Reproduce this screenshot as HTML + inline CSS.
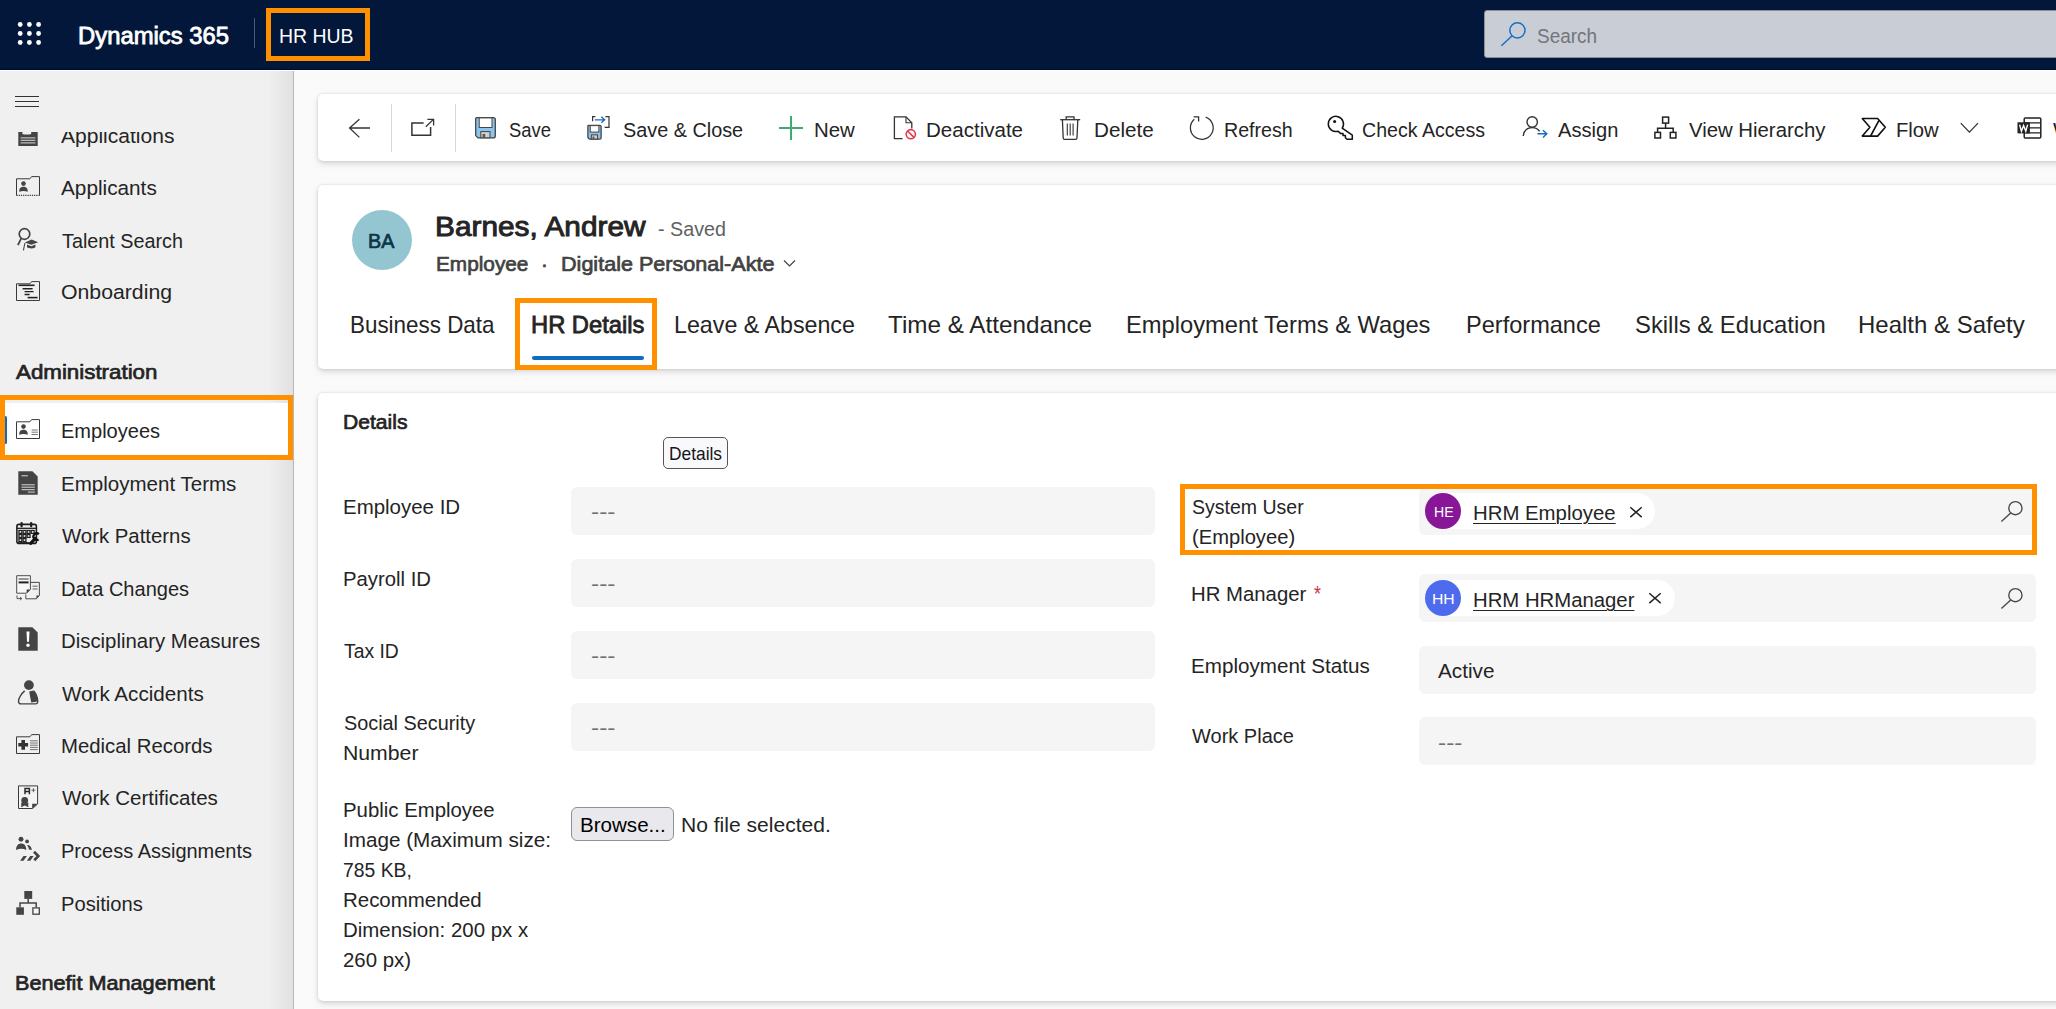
<!DOCTYPE html>
<html><head><meta charset="utf-8"><title>Employee: Barnes, Andrew - Dynamics 365</title>
<style>
html,body{margin:0;padding:0;overflow:hidden;}
#app{position:absolute;left:0;top:0;width:2056px;height:1009px;overflow:hidden;background:#fafafa;}
body{width:2056px;height:1009px;overflow:hidden;position:relative;background:#fafafa;font-family:"Liberation Sans",sans-serif;}
.t{position:absolute;white-space:pre;line-height:1;font-family:"Liberation Sans",sans-serif;}
.a{position:absolute;box-sizing:border-box;}
.card{position:absolute;background:#fff;box-shadow:0 0 3px rgba(0,0,0,.12),0 3px 6px rgba(0,0,0,.13);}
.fld{position:absolute;background:#f5f5f5;border-radius:6px;}
.ob{position:absolute;box-sizing:border-box;border:5px solid #ff9000;}
svg{position:absolute;overflow:visible;}
</style></head><body><div id="app">
<div class="a" style="left:0;top:0;width:2056px;height:70px;background:#03173a"></div>
<div class="a" style="left:0;top:68.6px;width:2056px;height:1.4px;background:#010a2e"></div>
<div class="a" style="left:0;top:70px;width:2056px;height:1.3px;background:#fff;z-index:3"></div>
<svg style="left:0;top:0" width="60" height="70"><circle cx="20.2" cy="24.5" r="2.4" fill="#fff"/><circle cx="20.2" cy="33.5" r="2.4" fill="#fff"/><circle cx="20.2" cy="42.5" r="2.4" fill="#fff"/><circle cx="29.4" cy="24.5" r="2.4" fill="#fff"/><circle cx="29.4" cy="33.5" r="2.4" fill="#fff"/><circle cx="29.4" cy="42.5" r="2.4" fill="#fff"/><circle cx="38.599999999999994" cy="24.5" r="2.4" fill="#fff"/><circle cx="38.599999999999994" cy="33.5" r="2.4" fill="#fff"/><circle cx="38.599999999999994" cy="42.5" r="2.4" fill="#fff"/></svg>
<div class="a" style="left:254px;top:18px;width:1px;height:30px;background:#4a5872"></div>
<div class="ob" style="left:266px;top:8px;width:104px;height:53px"></div>
<div class="a" style="left:1484px;top:10.3px;width:580px;height:47.6px;background:#c9cdd6;border-radius:3px;border:1px solid #8c8e96"></div>
<svg style="left:1500px;top:21px" width="28" height="28" viewBox="0 0 28 28"><circle cx="17.4" cy="9.3" r="7.6" fill="none" stroke="#156fc8" stroke-width="1.5"/><path d="M12.1 14.8 L1.4 24.8" stroke="#156fc8" stroke-width="1.5" fill="none"/></svg>
<div class="a" style="left:0;top:70px;width:294px;height:939px;background:#f0f0f0;border-right:1px solid #b8b8b8"></div>
<div class="a" style="left:268px;top:70px;width:25px;height:939px;background:linear-gradient(to right,rgba(0,0,0,0),rgba(0,0,0,.065))"></div>
<svg style="left:15px;top:95px" width="26" height="14"><path d="M0 1.5H24M0 6.5H24M0 11.5H24" stroke="#333" stroke-width="1"/></svg>
<div class="a" style="left:0;top:403px;width:293px;height:52px;background:#fff"></div>
<div class="a" style="left:4px;top:415.5px;width:2.5px;height:28px;background:#0f6cbd;border-radius:2px"></div>
<div class="ob" style="left:-1px;top:395px;width:294px;height:65px;border-width:5px 5px 5px 6px"></div>
<div class="a" style="left:50px;top:118px;width:200px;height:13.6px;background:#f0f0f0;z-index:5"></div>
<div class="card" style="left:318px;top:94px;width:1760px;height:67px;border-radius:5px"></div>
<div class="a" style="left:391px;top:104px;width:1px;height:48px;background:#d6d6d6"></div>
<div class="a" style="left:455px;top:104px;width:1px;height:48px;background:#d6d6d6"></div>
<div class="card" style="left:318px;top:185px;width:1760px;height:184px;border-radius:5px"></div>
<div class="a" style="left:352px;top:210px;width:60px;height:60px;border-radius:50%;background:#94c6d2"></div>
<svg style="left:783px;top:259px" width="14" height="10"><path d="M1 1.5 L6.5 7 L12 1.5" fill="none" stroke="#424242" stroke-width="1.2"/></svg>
<div class="a" style="left:531.5px;top:355.5px;width:112.5px;height:4.5px;border-radius:3px;background:#0f6cbd"></div>
<div class="ob" style="left:515px;top:298px;width:142px;height:72px"></div>
<div class="card" style="left:318px;top:393px;width:1760px;height:608.2px;border-radius:5px"></div>
<div class="a" style="left:663px;top:437px;width:65px;height:32px;border:1px solid #55555a;border-radius:5px;background:#f9f9fb"></div>
<div class="fld" style="left:571.2px;top:486.9px;width:584.3px;height:48px"></div>
<div class="fld" style="left:571.2px;top:558.9px;width:584.3px;height:48px"></div>
<div class="fld" style="left:571.2px;top:630.9px;width:584.3px;height:48px"></div>
<div class="fld" style="left:571.2px;top:702.9px;width:584.3px;height:48px"></div>
<div class="a" style="left:571px;top:807px;width:103px;height:34px;border:1px solid #8f8f9d;border-radius:6px;background:#e9e9ed"></div>
<div class="fld" style="left:1419.2px;top:487.5px;width:616.6px;height:47.9px"></div>
<div class="fld" style="left:1419.2px;top:573.9px;width:616.6px;height:47.9px"></div>
<div class="fld" style="left:1419.2px;top:645.7px;width:616.6px;height:47.9px"></div>
<div class="fld" style="left:1419.2px;top:716.9px;width:616.6px;height:47.9px"></div>
<div class="ob" style="left:1179.5px;top:484px;width:857.5px;height:71px"></div>
<div class="a" style="left:1424.5px;top:493px;width:230px;height:36px;border-radius:18px;background:#fff"></div>
<div class="a" style="left:1425px;top:493px;width:36px;height:36px;border-radius:50%;background:#881798"></div>
<svg style="left:1629.7px;top:506.5px" width="12" height="10.4"><path d="M0.3 0.3L11.7 10.1M11.7 0.3L0.3 10.1" stroke="#242424" stroke-width="1.5"/></svg>
<div class="a" style="left:1424.5px;top:580px;width:250px;height:36px;border-radius:18px;background:#fff"></div>
<div class="a" style="left:1425px;top:580px;width:36px;height:36px;border-radius:50%;background:#4f6bed"></div>
<svg style="left:1649.4px;top:593.4px" width="12" height="10.4"><path d="M0.3 0.3L11.7 10.1M11.7 0.3L0.3 10.1" stroke="#242424" stroke-width="1.5"/></svg>
<svg style="left:2000px;top:500px" width="24" height="24" viewBox="0 0 24 24"><circle cx="15.4" cy="8.2" r="6.6" fill="none" stroke="#4a4a4a" stroke-width="1.4"/><path d="M10.7 12.9 L1.4 21.6" stroke="#4a4a4a" stroke-width="1.4"/></svg>
<svg style="left:2000px;top:587.4px" width="24" height="24" viewBox="0 0 24 24"><circle cx="15.4" cy="8.2" r="6.6" fill="none" stroke="#4a4a4a" stroke-width="1.4"/><path d="M10.7 12.9 L1.4 21.6" stroke="#4a4a4a" stroke-width="1.4"/></svg>
<svg style="left:16px;top:174.2px" width="24" height="24" viewBox="0 0 24 24"><path d="M0.5 4.8 H13.9 L15.6 2.6 H23.5 V21.5" fill="none" stroke="#3a3a3a" stroke-width="1"/><path d="M0.5 4.8 V21.5" stroke="#3a3a3a" stroke-width="1"/><path d="M0.5 21.4 H23.5" stroke="#3a3a3a" stroke-width="1.2" stroke-dasharray="1.2 1"/><circle cx="7.5" cy="9.6" r="2.3" fill="#444"/><path d="M3.2 17.799999999999997 C3.2 13.6 5.3 12.8 7.5 12.8 C9.7 12.8 11.8 13.6 11.8 17.799999999999997 Q7.5 16.2 3.2 17.799999999999997 Z" fill="#444"/></svg>
<svg style="left:16px;top:227.1px" width="24" height="24" viewBox="0 0 24 24"><circle cx="8.5" cy="7" r="5.3" fill="none" stroke="#444" stroke-width="1.7"/><path d="M5.2 11.4 L1.9 18.2" stroke="#444" stroke-width="1.8"/><path d="M8.8 15.4 L15.6 12.6 L22.2 15.2 L15.4 17.8 Z" fill="#444"/><path d="M11 17.6 V20.2 C13 21.8 17.4 21.8 19.4 20.2 V17.6 L15.4 19.2 Z" fill="#444"/><path d="M8.9 16 L7.4 23.4" stroke="#444" stroke-width="1.1"/></svg>
<svg style="left:16px;top:278.6px" width="24" height="24" viewBox="0 0 24 24"><path d="M0.5 4.8 H13.9 L15.6 2.6 H23.5 V21.5 H0.5 Z" fill="none" stroke="#3a3a3a" stroke-width="1"/><path d="M2.6 6.3 H18.6" stroke="#222" stroke-width="1.6"/><path d="M6.6 9.7 H16.6 M8.6 12.6 H17.6 M8.6 15.5 H13.6" stroke="#222" stroke-width="1.4"/><path d="M11.6 18.6 H21.6" stroke="#222" stroke-width="1.6"/></svg>
<svg style="left:16px;top:417.1px" width="24" height="24" viewBox="0 0 24 24"><path d="M0.5 4.8 H13.9 L15.6 2.6 H23.5 V21.5 H0.5 Z" fill="none" stroke="#3a3a3a" stroke-width="1"/><circle cx="7.5" cy="9.6" r="2.3" fill="#444"/><path d="M3.2 17.799999999999997 C3.2 13.6 5.3 12.8 7.5 12.8 C9.7 12.8 11.8 13.6 11.8 17.799999999999997 Q7.5 16.2 3.2 17.799999999999997 Z" fill="#444"/><path d="M15.6 13 H21.8 M15.6 15.2 H21.8 M15.6 17.5 H21.8" stroke="#666" stroke-width="0.9"/></svg>
<svg style="left:16px;top:470.7px" width="24" height="24" viewBox="0 0 24 24"><path d="M2.3 0.3 H16.4 L21.7 5.6 V23.7 H2.3 Z" fill="#444"/><path d="M5.5 4.8 H11.8 M5.5 13.8 H18.8 M5.5 16.2 H18.8 M5.5 18.7 H18.8 M11.8 21.1 H18.8" stroke="#d8d8d8" stroke-width="1"/></svg>
<svg style="left:16px;top:522.3px" width="24" height="24" viewBox="0 0 24 24"><rect x="0.9" y="2.4" width="19.5" height="19" rx="2" fill="none" stroke="#1e1e1e" stroke-width="1.6"/><path d="M0.9 6.3 H20.4" stroke="#1e1e1e" stroke-width="1.3"/><path d="M5.6 1.1 V4.2 M15.2 1.1 V4.2" stroke="#1e1e1e" stroke-width="2.3" stroke-linecap="round"/><path d="M2 21 H13" stroke="#1e1e1e" stroke-width="1.6"/><rect x="2.95" y="8.450000000000001" width="2.9" height="2.9" fill="none" stroke="#1e1e1e" stroke-width="1.25"/><rect x="2.95" y="12.55" width="2.9" height="2.9" fill="none" stroke="#1e1e1e" stroke-width="1.25"/><rect x="2.95" y="16.650000000000002" width="2.9" height="2.9" fill="none" stroke="#1e1e1e" stroke-width="1.25"/><rect x="7.05" y="8.450000000000001" width="2.9" height="2.9" fill="none" stroke="#1e1e1e" stroke-width="1.25"/><rect x="7.05" y="12.55" width="2.9" height="2.9" fill="none" stroke="#1e1e1e" stroke-width="1.25"/><rect x="7.05" y="16.650000000000002" width="2.9" height="2.9" fill="none" stroke="#1e1e1e" stroke-width="1.25"/><rect x="11.15" y="8.450000000000001" width="2.9" height="2.9" fill="none" stroke="#1e1e1e" stroke-width="1.25"/><rect x="11.15" y="12.55" width="2.9" height="2.9" fill="none" stroke="#1e1e1e" stroke-width="1.25"/><rect x="15.25" y="8.450000000000001" width="2.9" height="2.9" fill="none" stroke="#1e1e1e" stroke-width="1.25"/><path d="M14.6 21.4 L19.4 16.4" stroke="#111" stroke-width="3" stroke-linecap="round"/><path d="M22.9 12.2 A3.3 3.3 0 1 0 22.6 17.4" fill="none" stroke="#111" stroke-width="2.2"/></svg>
<svg style="left:16px;top:576.0px" width="24" height="24" viewBox="0 0 24 24"><path d="M0.7 -0.3 H14.4 V13.4 L10.6 17.2 H0.7 Z" fill="#f7f7f7" stroke="#3a3a3a" stroke-width="0.9"/><path d="M2.6 3 H12.6" stroke="#333" stroke-width="1"/><path d="M2.6 6.4 H12.6" stroke="#222" stroke-width="2"/><path d="M10.6 17.2 V13.4 H14.4 Z" fill="#444"/><path d="M14.6 6.4 H23.4 V19.4 L20.4 22.8 H9.8 V18.6" fill="none" stroke="#3a3a3a" stroke-width="0.9"/><path d="M16.6 10.2 H21.6 M16.6 13 H21.6" stroke="#555" stroke-width="0.9"/><path d="M20.4 22.8 V19.4 H23.4 Z" fill="#444"/><path d="M1 19.4 V22.6 H5.6 M4 21 L5.8 22.6 L4 24.2" fill="none" stroke="#444" stroke-width="0.9"/></svg>
<svg style="left:16px;top:627.2px" width="24" height="24" viewBox="0 0 24 24"><path d="M2.3 0.3 H16.4 L21.7 5.6 V23.7 H2.3 Z" fill="#444"/><path d="M10.5 4.6 H13.5 L13 14.8 H11 Z" fill="#fff"/><circle cx="12" cy="18.2" r="1.7" fill="#fff"/></svg>
<svg style="left:16px;top:680.7px" width="24" height="24" viewBox="0 0 24 24"><circle cx="12.9" cy="4.1" r="4.9" fill="#444"/><path d="M8.7 9.9 C5.5 12.5 2.2 17.5 2.5 20.5 Q2.6 22.9 5 22.9 H19.5 Q21.9 22.9 21.7 20 C21.5 16 20 12.5 17.7 9.9" fill="none" stroke="#444" stroke-width="1.4"/><path d="M13.2 10.4 L17.7 9.6 C20.2 12.5 21.9 16.6 21.4 19.6 L20.4 20.8 L15.2 21.6 Z" fill="#444"/></svg>
<svg style="left:16px;top:732.3px" width="24" height="24" viewBox="0 0 24 24"><path d="M0.5 4.8 H13.9 L15.6 2.6 H23.5 V21.5 H0.5 Z" fill="none" stroke="#3a3a3a" stroke-width="1"/><path d="M5.4 7.9 H9 V11 H12.1 V14.6 H9 V17.7 H5.4 V14.6 H2.3 V11 H5.4 Z" fill="#333"/><path d="M14 8.8 H21.8 M14 11 H21.8 M14 13.2 H21.8 M14 15.4 H21.8 M14 17.6 H21.8" stroke="#666" stroke-width="0.9"/></svg>
<svg style="left:16px;top:784.8px" width="24" height="24" viewBox="0 0 24 24"><path d="M2.5 0.9 H21.6 V19 L16.6 23.5 H2.5 Z" fill="#f4f4f4" stroke="#3a3a3a" stroke-width="1"/><path d="M16.2 23.6 L21.7 18.8 H16.2 Z" fill="#444"/><circle cx="8.7" cy="15.3" r="3.4" fill="#444"/><path d="M5.2 17.5 V22.2 L8.7 20.5 L12.3 22.2 V17.5 Z" fill="#444"/><path d="M9 9.2 V3.5 H13.4 V9.2 M9 6.5 H13.4" fill="none" stroke="#2a2a2a" stroke-width="1.5"/><path d="M15.4 5.2 H19.4 M17.4 3.2 V7.2" stroke="#555" stroke-width="0.9"/></svg>
<svg style="left:16px;top:837.2px" width="24" height="24" viewBox="0 0 24 24"><circle cx="5" cy="2.2" r="2.45" fill="#444"/><circle cx="11.1" cy="4.4" r="1.9" fill="#444"/><path d="M0.1 12.9 C0.1 8.6 2.4 6.6 5.2 6.6 C8 6.6 10.3 8.6 10.3 12.9 Q5.2 10.4 0.1 12.9 Z" fill="#444"/><path d="M11 8.1 C13.6 7.9 15.6 10 15.9 12.9 L12.9 12.4 C12.6 10.6 12 9.2 11 8.1 Z" fill="#444"/><path d="M4.1 23.7 H7.5 L10.9 19 H7.5 Z M10.9 23.7 H14.3 L17.6 19 H14.2 Z" fill="#444"/><path d="M18 14.7 L22.3 19.1 L18.3 23.3" fill="none" stroke="#444" stroke-width="2.7"/></svg>
<svg style="left:16px;top:888.9px" width="24" height="24" viewBox="0 0 24 24"><rect x="8.3" y="2" width="7.9" height="7.9" fill="#444"/><path d="M12.2 9.9 V13.9 M4 18.3 V13.9 H20.2 V18.3" fill="none" stroke="#444" stroke-width="1.5"/><rect x="0.3" y="18.3" width="7.6" height="7.5" fill="#444"/><rect x="16.9" y="18.9" width="6.4" height="6.3" fill="#f7f7f7" stroke="#444" stroke-width="1.3"/></svg>
<svg style="left:16px;top:131.7px;z-index:6" width="24" height="15" viewBox="0 0 24 15"><path d="M2.3 0 H6.4 V1.9 L8 2.6 H13.6 L15.2 1.9 V0 H21.7 V14.1 H2.3 Z" fill="#444"/><path d="M4.6 5.9 H19.4 M4.6 8.3 H19.4 M4.6 10.9 H19.4" stroke="#dadada" stroke-width="1"/></svg>
<svg style="left:348px;top:116px" width="24" height="24" viewBox="0 0 24 24"><path d="M22 12 H1.4 M11.4 3.2 L1.6 12 L11.4 21.4" fill="none" stroke="#333" stroke-width="1.3"/></svg>
<svg style="left:410px;top:116px" width="26" height="24" viewBox="0 0 26 24"><path d="M13.6 6.9 H1.9 V19.2 H20.6 V11" fill="none" stroke="#333" stroke-width="1.5"/><path d="M15.8 10.8 L23.4 3.4 M17.4 3.3 H23.6 V9.6" fill="none" stroke="#333" stroke-width="1.3"/></svg>
<svg style="left:475.4px;top:117.3px" width="21" height="21.6" viewBox="0 0 21 21.6"><path d="M1.6 0.7 H18.4 Q20.3 0.7 20.3 2.6 V19 Q20.3 20.9 18.4 20.9 H3 L0.7 18.6 V1.6 Q0.7 0.7 1.6 0.7 Z" fill="#8cc4ee" stroke="#444" stroke-width="1.3"/><rect x="4.2" y="0.9" width="12.8" height="9.6" fill="#fff" stroke="#444" stroke-width="1"/><rect x="5.8" y="14.6" width="9.2" height="6.2" fill="#d0d0d0" stroke="#444" stroke-width="1"/><rect x="7.6" y="17" width="2.6" height="3.6" fill="#555"/></svg>
<svg style="left:587px;top:125.2px" width="15" height="14.6" viewBox="0 0 21 21.6"><path d="M1.6 0.7 H18.4 Q20.3 0.7 20.3 2.6 V19 Q20.3 20.9 18.4 20.9 H3 L0.7 18.6 V1.6 Q0.7 0.7 1.6 0.7 Z" fill="#8cc4ee" stroke="#444" stroke-width="1.9"/><rect x="4.2" y="0.9" width="12.8" height="9.6" fill="#fff" stroke="#444" stroke-width="1.5"/><rect x="5.8" y="14.6" width="9.2" height="6.2" fill="#d0d0d0" stroke="#444" stroke-width="1.5"/><rect x="7.6" y="17" width="2.6" height="3.6" fill="#555"/></svg>
<svg style="left:590px;top:115px" width="22" height="14" viewBox="0 0 22 14"><path d="M5.4 1.6 H2.6 V6.2 M15.4 1.6 H19 V12.4 H14.6" fill="none" stroke="#333" stroke-width="1.2"/><path d="M4.8 4.8 H14.6 M11.4 1.8 L14.6 4.8 L11.4 7.8" fill="none" stroke="#1668c1" stroke-width="1.3"/></svg>
<svg style="left:778px;top:115px" width="26" height="26" viewBox="0 0 26 26"><path d="M13 1 V25 M1 13 H25" stroke="#3cae6c" stroke-width="2"/></svg>
<svg style="left:892px;top:115px" width="26" height="26" viewBox="0 0 26 26"><path d="M10.6 23.6 H2.4 V1.9 H14 L19.8 7.8 V13.4" fill="none" stroke="#333" stroke-width="1.3"/><path d="M14 1.9 V7.8 H19.8" fill="none" stroke="#333" stroke-width="1.1"/><circle cx="18.8" cy="19.2" r="4.6" fill="#fff" stroke="#e8374d" stroke-width="1.6"/><path d="M15.6 16 L22 22.4" stroke="#e8374d" stroke-width="1.6"/></svg>
<svg style="left:1058px;top:115px" width="24" height="26" viewBox="0 0 24 26"><path d="M2.2 4.7 H22.2" stroke="#333" stroke-width="1.3"/><path d="M8.2 4.6 V1.8 H16 V4.6" fill="none" stroke="#333" stroke-width="1.3"/><path d="M4.4 4.8 L5.2 23 Q5.3 24.3 6.6 24.3 H17.6 Q18.9 24.3 19 23 L19.8 4.8" fill="none" stroke="#333" stroke-width="1.3"/><path d="M9.3 8.6 V20.6 M12.2 8.6 V20.6 M15.1 8.6 V20.6" stroke="#333" stroke-width="1.1"/></svg>
<svg style="left:1188px;top:114px" width="28" height="28" viewBox="0 0 28 28"><path d="M17.70 3.19 A11.4 11.4 0 1 1 6.32 5.30" fill="none" stroke="#333" stroke-width="1.3"/><path d="M5.6 2.8 H10.6 V7.6" fill="none" stroke="#333" stroke-width="1.3"/></svg>
<svg style="left:1328px;top:115px" width="26" height="26" viewBox="0 0 26 26"><path d="M14.2 13.2 A7.6 7.6 0 1 0 10.2 16.2 L12.4 18.4 H15 V20.6 H17.4 V22.8 L19 24.3 H24.3 V20.2 Z" fill="#fff" stroke="#111" stroke-width="1.5" stroke-linejoin="round"/><circle cx="6.6" cy="6.6" r="1.5" fill="#111"/></svg>
<svg style="left:1521px;top:114px" width="28" height="28" viewBox="0 0 28 28"><circle cx="11.2" cy="8" r="5.2" fill="none" stroke="#333" stroke-width="1.4"/><path d="M2.2 22 C3 16.6 6.6 13.6 11.2 13.6 C14.6 13.6 17 15 18.6 17.4" fill="none" stroke="#333" stroke-width="1.4"/><path d="M16.4 19.8 H25.6 M22 16.2 L25.8 19.8 L22 23.4" fill="none" stroke="#1668c1" stroke-width="1.4"/></svg>
<svg style="left:1653px;top:115px" width="26" height="26" viewBox="0 0 26 26"><rect x="9.6" y="2.1" width="6" height="6" fill="none" stroke="#222" stroke-width="1.5"/><path d="M12.6 8.1 V13.2 M4.6 17.4 V13.2 H20.2 V17.4" fill="none" stroke="#222" stroke-width="1.5"/><rect x="1.9" y="17.4" width="5.6" height="5.6" fill="none" stroke="#222" stroke-width="1.5"/><rect x="17.3" y="17.4" width="5.6" height="5.6" fill="none" stroke="#222" stroke-width="1.5"/></svg>
<svg style="left:1860px;top:116px" width="28" height="24" viewBox="0 0 28 24"><path d="M2.3 2.5 H17.6 L25.3 11.3 L17.6 20.1 H2.3 L9.9 11.3 Z" fill="none" stroke="#111" stroke-width="1.6" stroke-linejoin="round"/><path d="M19 4.3 L10.6 20" stroke="#111" stroke-width="1.6"/></svg>
<svg style="left:1959px;top:121px" width="22" height="14" viewBox="0 0 22 14"><path d="M1.8 2.1 L10.4 11.1 L19 2.1" fill="none" stroke="#333" stroke-width="1.3"/></svg>
<svg style="left:2016px;top:116px" width="28" height="24" viewBox="0 0 28 24"><rect x="8.2" y="1.9" width="16.6" height="20" rx="1.2" fill="#fff" stroke="#222" stroke-width="1.5"/><path d="M8.2 6.9 H24.8 M8.2 11.9 H24.8 M8.2 16.9 H24.8" stroke="#222" stroke-width="1.4"/><rect x="1.5" y="6.3" width="12.4" height="11.1" fill="#222"/><path d="M3.6 8.6 L5.4 15.2 L7.6 9.4 L9.8 15.2 L11.6 8.6" fill="none" stroke="#fff" stroke-width="1.4"/></svg>
<div class="t" style="left:77.99px;top:25.00px;font-size:23.5px;font-weight:400;color:#fff;transform:scaleX(1.0147);transform-origin:0 0;-webkit-text-stroke:0.80px #fff;">Dynamics 365</div>
<div class="t" style="left:279.05px;top:26.00px;font-size:20.5px;font-weight:400;color:#fff;transform:scaleX(0.9491);transform-origin:0 0;">HR HUB</div>
<div class="t" style="left:1536.60px;top:26.00px;font-size:20.5px;font-weight:400;color:#74747a;transform:scaleX(0.9248);transform-origin:0 0;">Search</div>
<div class="t" style="left:61.20px;top:178.00px;font-size:20.5px;font-weight:400;color:#242424;transform:scaleX(1.0124);transform-origin:0 0;">Applicants</div>
<div class="t" style="left:61.60px;top:231.00px;font-size:20.5px;font-weight:400;color:#242424;transform:scaleX(0.9644);transform-origin:0 0;">Talent Search</div>
<div class="t" style="left:61.20px;top:282.00px;font-size:20.5px;font-weight:400;color:#242424;transform:scaleX(1.0362);transform-origin:0 0;">Onboarding</div>
<div class="t" style="left:60.82px;top:421.00px;font-size:20.5px;font-weight:400;color:#242424;transform:scaleX(0.9764);transform-origin:0 0;">Employees</div>
<div class="t" style="left:60.90px;top:474.00px;font-size:20.5px;font-weight:400;color:#242424;transform:scaleX(1.0018);transform-origin:0 0;">Employment Terms</div>
<div class="t" style="left:61.50px;top:526.00px;font-size:20.5px;font-weight:400;color:#242424;transform:scaleX(0.9927);transform-origin:0 0;">Work Patterns</div>
<div class="t" style="left:60.92px;top:579.00px;font-size:20.5px;font-weight:400;color:#242424;transform:scaleX(0.9776);transform-origin:0 0;">Data Changes</div>
<div class="t" style="left:61.31px;top:631.00px;font-size:20.5px;font-weight:400;color:#242424;transform:scaleX(0.9932);transform-origin:0 0;">Disciplinary Measures</div>
<div class="t" style="left:61.50px;top:684.00px;font-size:20.5px;font-weight:400;color:#242424;transform:scaleX(1.0058);transform-origin:0 0;">Work Accidents</div>
<div class="t" style="left:60.91px;top:736.00px;font-size:20.5px;font-weight:400;color:#242424;transform:scaleX(0.9926);transform-origin:0 0;">Medical Records</div>
<div class="t" style="left:61.50px;top:788.00px;font-size:20.5px;font-weight:400;color:#242424;transform:scaleX(1.0011);transform-origin:0 0;">Work Certificates</div>
<div class="t" style="left:61.33px;top:841.00px;font-size:20.5px;font-weight:400;color:#242424;transform:scaleX(0.9747);transform-origin:0 0;">Process Assignments</div>
<div class="t" style="left:61.22px;top:894.00px;font-size:20.5px;font-weight:400;color:#242424;transform:scaleX(0.9838);transform-origin:0 0;">Positions</div>
<div class="t" style="left:61.00px;top:126.00px;font-size:20.5px;font-weight:400;color:#242424;transform:scaleX(1.0264);transform-origin:0 0;">Applications</div>
<div class="t" style="left:15.50px;top:362.00px;font-size:20.5px;font-weight:400;color:#242424;transform:scaleX(1.0889);transform-origin:0 0;-webkit-text-stroke:0.70px #242424;">Administration</div>
<div class="t" style="left:14.94px;top:973.00px;font-size:20.5px;font-weight:400;color:#242424;transform:scaleX(1.0564);transform-origin:0 0;-webkit-text-stroke:0.70px #242424;">Benefit Management</div>
<div class="t" style="left:509.00px;top:120.00px;font-size:20.5px;font-weight:400;color:#242424;transform:scaleX(0.8959);transform-origin:0 0;">Save</div>
<div class="t" style="left:622.70px;top:120.00px;font-size:20.5px;font-weight:400;color:#242424;transform:scaleX(0.9669);transform-origin:0 0;">Save &amp; Close</div>
<div class="t" style="left:814.01px;top:120.00px;font-size:20.5px;font-weight:400;color:#242424;transform:scaleX(0.9949);transform-origin:0 0;">New</div>
<div class="t" style="left:926.20px;top:120.00px;font-size:20.5px;font-weight:400;color:#242424;transform:scaleX(1.0015);transform-origin:0 0;">Deactivate</div>
<div class="t" style="left:1093.69px;top:120.00px;font-size:20.5px;font-weight:400;color:#242424;transform:scaleX(1.0077);transform-origin:0 0;">Delete</div>
<div class="t" style="left:1223.84px;top:120.00px;font-size:20.5px;font-weight:400;color:#242424;transform:scaleX(0.9577);transform-origin:0 0;">Refresh</div>
<div class="t" style="left:1362.44px;top:120.00px;font-size:20.5px;font-weight:400;color:#242424;transform:scaleX(0.9555);transform-origin:0 0;">Check Access</div>
<div class="t" style="left:1557.60px;top:120.00px;font-size:20.5px;font-weight:400;color:#242424;transform:scaleX(0.9815);transform-origin:0 0;">Assign</div>
<div class="t" style="left:1688.70px;top:120.00px;font-size:20.5px;font-weight:400;color:#242424;transform:scaleX(0.9919);transform-origin:0 0;">View Hierarchy</div>
<div class="t" style="left:1895.91px;top:120.00px;font-size:20.5px;font-weight:400;color:#242424;transform:scaleX(0.9864);transform-origin:0 0;">Flow</div>
<div class="t" style="left:2052.50px;top:120.00px;font-size:20.5px;font-weight:400;color:#242424;transform:scaleX(1.0171);transform-origin:0 0;">Word Templates</div>
<div class="t" style="left:368.38px;top:232.00px;font-size:19.5px;font-weight:400;color:#0c3547;transform:scaleX(1.0157);transform-origin:0 0;-webkit-text-stroke:0.66px #0c3547;">BA</div>
<div class="t" style="left:435.31px;top:212.00px;font-size:28.5px;font-weight:400;color:#242424;transform:scaleX(1.0463);transform-origin:0 0;-webkit-text-stroke:0.97px #242424;">Barnes, Andrew</div>
<div class="t" style="left:658.00px;top:219.00px;font-size:20.5px;font-weight:400;color:#616161;transform:scaleX(0.9609);transform-origin:0 0;">- Saved</div>
<div class="t" style="left:436.39px;top:254.00px;font-size:20.5px;font-weight:400;color:#424242;transform:scaleX(1.0138);transform-origin:0 0;-webkit-text-stroke:0.70px #424242;">Employee</div>
<div class="t" style="left:541.00px;top:254.00px;font-size:20.5px;font-weight:400;color:#424242;-webkit-text-stroke:0.70px #424242;">·</div>
<div class="t" style="left:561.15px;top:254.00px;font-size:20.5px;font-weight:400;color:#424242;transform:scaleX(1.0525);transform-origin:0 0;-webkit-text-stroke:0.70px #424242;">Digitale Personal-Akte</div>
<div class="t" style="left:350.04px;top:314.00px;font-size:23.4px;font-weight:400;color:#242424;transform:scaleX(0.9582);transform-origin:0 0;">Business Data</div>
<div class="t" style="left:530.59px;top:314.00px;font-size:23.4px;font-weight:400;color:#242424;transform:scaleX(1.0147);transform-origin:0 0;-webkit-text-stroke:0.80px #242424;">HR Details</div>
<div class="t" style="left:673.91px;top:314.00px;font-size:23.4px;font-weight:400;color:#242424;transform:scaleX(0.9937);transform-origin:0 0;">Leave &amp; Absence</div>
<div class="t" style="left:888.30px;top:314.00px;font-size:23.4px;font-weight:400;color:#242424;transform:scaleX(1.0368);transform-origin:0 0;">Time &amp; Attendance</div>
<div class="t" style="left:1126.29px;top:314.00px;font-size:23.4px;font-weight:400;color:#242424;transform:scaleX(1.0140);transform-origin:0 0;">Employment Terms &amp; Wages</div>
<div class="t" style="left:1466.29px;top:314.00px;font-size:23.4px;font-weight:400;color:#242424;transform:scaleX(1.0069);transform-origin:0 0;">Performance</div>
<div class="t" style="left:1635.28px;top:314.00px;font-size:23.4px;font-weight:400;color:#242424;transform:scaleX(1.0189);transform-origin:0 0;">Skills &amp; Education</div>
<div class="t" style="left:1858.47px;top:314.00px;font-size:23.4px;font-weight:400;color:#242424;transform:scaleX(1.0252);transform-origin:0 0;">Health &amp; Safety</div>
<div class="t" style="left:342.94px;top:412.00px;font-size:20px;font-weight:400;color:#242424;transform:scaleX(1.0560);transform-origin:0 0;-webkit-text-stroke:0.68px #242424;">Details</div>
<div class="t" style="left:668.85px;top:445.00px;font-size:18.2px;font-weight:400;color:#15141a;transform:scaleX(0.9541);transform-origin:0 0;">Details</div>
<div class="t" style="left:591.00px;top:502.00px;font-size:20.5px;font-weight:400;color:#707070;transform:scaleX(1.1957);transform-origin:0 0;">---</div>
<div class="t" style="left:591.00px;top:574.00px;font-size:20.5px;font-weight:400;color:#707070;transform:scaleX(1.1957);transform-origin:0 0;">---</div>
<div class="t" style="left:591.00px;top:646.00px;font-size:20.5px;font-weight:400;color:#707070;transform:scaleX(1.1957);transform-origin:0 0;">---</div>
<div class="t" style="left:591.00px;top:718.00px;font-size:20.5px;font-weight:400;color:#707070;transform:scaleX(1.1957);transform-origin:0 0;">---</div>
<div class="t" style="left:342.90px;top:497.00px;font-size:20.5px;font-weight:400;color:#242424;transform:scaleX(0.9978);transform-origin:0 0;">Employee ID</div>
<div class="t" style="left:342.91px;top:569.00px;font-size:20.5px;font-weight:400;color:#242424;transform:scaleX(0.9902);transform-origin:0 0;">Payroll ID</div>
<div class="t" style="left:343.50px;top:641.00px;font-size:20.5px;font-weight:400;color:#242424;transform:scaleX(0.9425);transform-origin:0 0;">Tax ID</div>
<div class="t" style="left:343.90px;top:713.00px;font-size:20.5px;font-weight:400;color:#242424;transform:scaleX(0.9668);transform-origin:0 0;">Social Security</div>
<div class="t" style="left:343.17px;top:743.00px;font-size:20.5px;font-weight:400;color:#242424;transform:scaleX(1.0349);transform-origin:0 0;">Number</div>
<div class="t" style="left:343.21px;top:800.00px;font-size:20.5px;font-weight:400;color:#242424;transform:scaleX(0.9935);transform-origin:0 0;">Public Employee</div>
<div class="t" style="left:343.19px;top:830.00px;font-size:20.5px;font-weight:400;color:#242424;transform:scaleX(1.0089);transform-origin:0 0;">Image (Maximum size:</div>
<div class="t" style="left:343.26px;top:860.00px;font-size:20.5px;font-weight:400;color:#242424;transform:scaleX(0.9438);transform-origin:0 0;">785 KB,</div>
<div class="t" style="left:343.20px;top:890.00px;font-size:20.5px;font-weight:400;color:#242424;transform:scaleX(0.9977);transform-origin:0 0;">Recommended</div>
<div class="t" style="left:343.20px;top:920.00px;font-size:20.5px;font-weight:400;color:#242424;transform:scaleX(0.9974);transform-origin:0 0;">Dimension: 200 px x</div>
<div class="t" style="left:343.20px;top:950.00px;font-size:20.5px;font-weight:400;color:#242424;transform:scaleX(0.9962);transform-origin:0 0;">260 px)</div>
<div class="t" style="left:579.50px;top:815.00px;font-size:20.5px;font-weight:400;color:#000;transform:scaleX(1.0030);transform-origin:0 0;">Browse...</div>
<div class="t" style="left:681.27px;top:815.00px;font-size:20.5px;font-weight:400;color:#242424;transform:scaleX(1.0268);transform-origin:0 0;">No file selected.</div>
<div class="t" style="left:1191.70px;top:497.00px;font-size:20.5px;font-weight:400;color:#242424;transform:scaleX(0.9515);transform-origin:0 0;">System User</div>
<div class="t" style="left:1191.52px;top:527.00px;font-size:20.5px;font-weight:400;color:#242424;transform:scaleX(0.9836);transform-origin:0 0;">(Employee)</div>
<div class="t" style="left:1190.71px;top:584.00px;font-size:20.5px;font-weight:400;color:#242424;transform:scaleX(0.9923);transform-origin:0 0;">HR Manager</div>
<div class="t" style="left:1313.60px;top:584.00px;font-size:21.5px;font-weight:400;color:#cf3340;transform:scaleX(0.8333);transform-origin:0 0;">*</div>
<div class="t" style="left:1190.69px;top:656.00px;font-size:20.5px;font-weight:400;color:#242424;transform:scaleX(1.0057);transform-origin:0 0;">Employment Status</div>
<div class="t" style="left:1191.70px;top:726.00px;font-size:20.5px;font-weight:400;color:#242424;transform:scaleX(0.9757);transform-origin:0 0;">Work Place</div>
<div class="t" style="left:1433.56px;top:504.00px;font-size:15px;font-weight:400;color:#fff;transform:scaleX(0.9379);transform-origin:0 0;">HE</div>
<div class="t" style="left:1473.21px;top:503.00px;font-size:20.5px;font-weight:400;color:#242424;transform:scaleX(0.9934);transform-origin:0 0;text-decoration:underline;text-underline-offset:2.5px;text-decoration-thickness:1.1px">HRM Employee</div>
<div class="t" style="left:1431.55px;top:591.00px;font-size:15px;font-weight:400;color:#fff;transform:scaleX(1.0488);transform-origin:0 0;">HH</div>
<div class="t" style="left:1473.21px;top:590.00px;font-size:20.5px;font-weight:400;color:#242424;transform:scaleX(0.9909);transform-origin:0 0;text-decoration:underline;text-underline-offset:2.5px;text-decoration-thickness:1.1px">HRM HRManager</div>
<div class="t" style="left:1438.00px;top:661.00px;font-size:20.5px;font-weight:400;color:#242424;transform:scaleX(1.0104);transform-origin:0 0;">Active</div>
<div class="t" style="left:1438.00px;top:733.00px;font-size:20.5px;font-weight:400;color:#707070;transform:scaleX(1.1957);transform-origin:0 0;">---</div>
</div></body></html>
